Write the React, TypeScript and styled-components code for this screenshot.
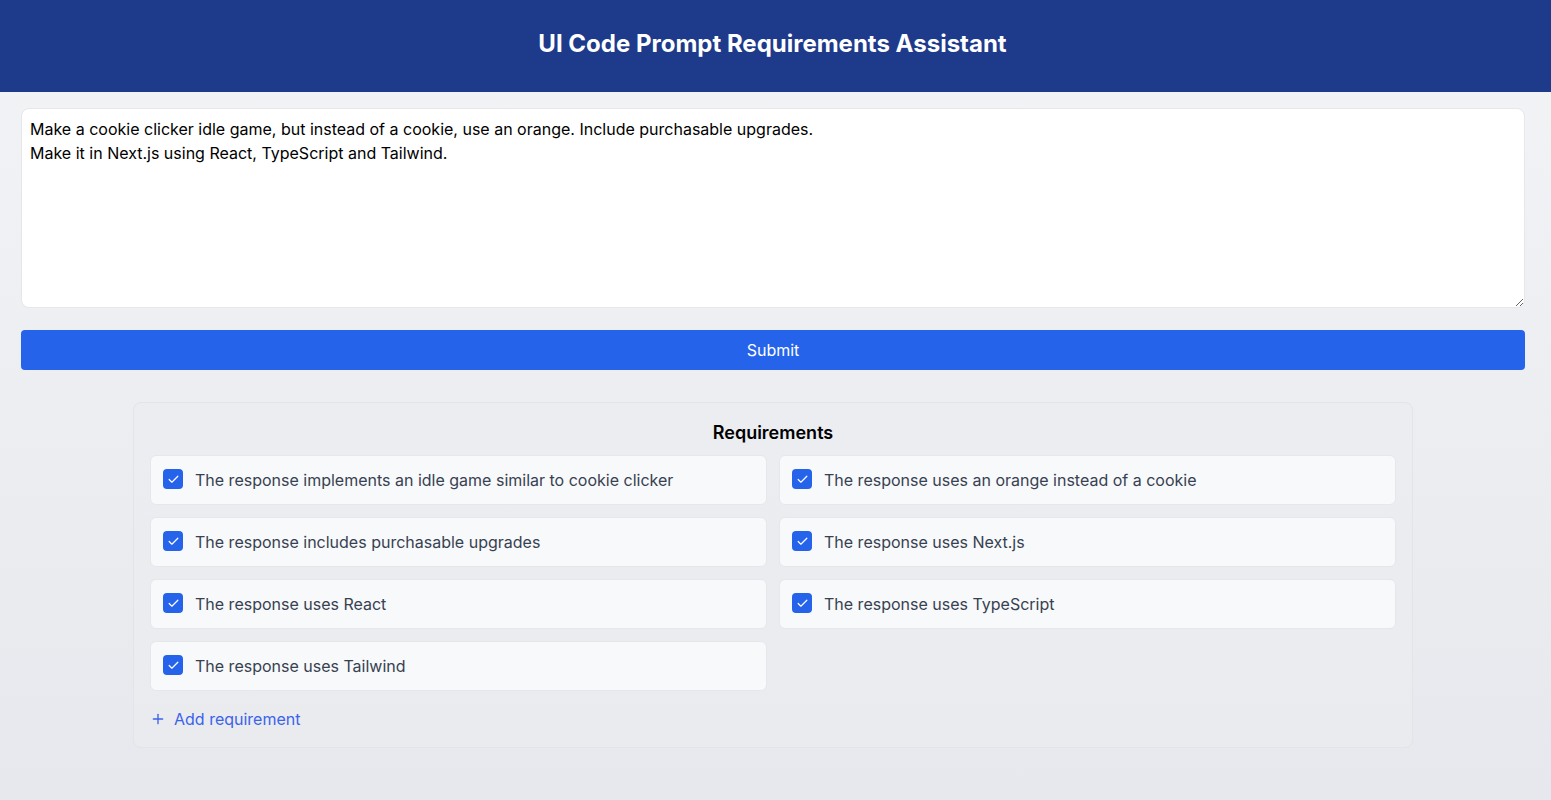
import React, { useState } from "react";
import styled, { createGlobalStyle } from "styled-components";

const GlobalStyle = createGlobalStyle`
  html, body { margin: 0; padding: 0; }
  body {
    font-family: Inter, "Noto Sans", sans-serif;
    background: linear-gradient(to bottom, #f3f4f6, #e7e8ed);
    min-height: 100vh;
  }
  * { box-sizing: border-box; }
`;

const Page = styled.div`
  min-height: 800px;
  display: flex;
  flex-direction: column;
`;

const Header = styled.header`
  background: #1e3a8a;
  padding: 30px 6px 34px 0;
  display: flex;
  justify-content: center;
`;

const Title = styled.h1`
  margin: 0;
  color: #ffffff;
  font-size: 24px;
  line-height: 28px;
  font-weight: 700;
`;

const Main = styled.main`
  padding: 16px 26px 32px 21px;
  display: flex;
  flex-direction: column;
`;

const PromptArea = styled.textarea`
  width: 100%;
  height: 200px;
  padding: 8px;
  border: 1px solid #e5e7eb;
  border-radius: 8px;
  background: #ffffff;
  font-family: Inter, "Noto Sans", sans-serif;
  font-size: 16px;
  line-height: 24px;
  color: #000000;
  resize: vertical;
  outline: none;
`;

const SubmitButton = styled.button`
  margin-top: 22px;
  height: 40px;
  width: 100%;
  border: none;
  border-radius: 4px;
  background: #2563eb;
  color: #ffffff;
  font-family: Inter, "Noto Sans", sans-serif;
  font-size: 16px;
  cursor: pointer;
`;

const Panel = styled.section`
  margin: 32px auto 0;
  width: 100%;
  max-width: 1280px;
  padding: 16px;
  border: 1px solid #e3e4e8;
  border-radius: 8px;
  background: rgba(235, 236, 240, 0.6);
`;

const PanelTitle = styled.h2`
  margin: 0 0 8px;
  text-align: center;
  font-size: 18px;
  line-height: 28px;
  font-weight: 600;
  color: #000000;
`;

const Grid = styled.div`
  display: grid;
  grid-template-columns: 1fr 1fr;
  gap: 12px;
`;

const Item = styled.label`
  display: flex;
  align-items: center;
  gap: 12px;
  padding: 12px;
  background: #f8f9fb;
  border: 1px solid #e5e7eb;
  border-radius: 6px;
  font-size: 16px;
  line-height: 24px;
  color: #374151;
  cursor: pointer;
`;

const Box = styled.span<{ $checked: boolean }>`
  flex: none;
  width: 20px;
  height: 20px;
  margin-top: -2px;
  border-radius: 4px;
  background: ${(p) => (p.$checked ? "#2563eb" : "#ffffff")};
  border: ${(p) => (p.$checked ? "none" : "1px solid #9ca3af")};
  display: flex;
  align-items: center;
  justify-content: center;
`;

const AddButton = styled.button`
  margin-top: 16px;
  display: flex;
  align-items: center;
  gap: 8px;
  padding: 0;
  border: none;
  background: none;
  color: #3b63ea;
  font-family: Inter, "Noto Sans", sans-serif;
  font-size: 16px;
  line-height: 24px;
  cursor: pointer;
`;

const initial = [
  "The response implements an idle game similar to cookie clicker",
  "The response uses an orange instead of a cookie",
  "The response includes purchasable upgrades",
  "The response uses Next.js",
  "The response uses React",
  "The response uses TypeScript",
  "The response uses Tailwind",
];

const CheckIcon = () => (
  <svg width="13" height="13" viewBox="0 0 24 24" fill="none" stroke="#ffffff" strokeWidth="2.2" strokeLinecap="round" strokeLinejoin="round">
    <polyline points="20 6 9 17 4 12" />
  </svg>
);

const PlusIcon = () => (
  <svg width="16" height="16" viewBox="0 0 24 24" fill="none" stroke="currentColor" strokeWidth="2" strokeLinecap="round">
    <path d="M5 12h14" />
    <path d="M12 5v14" />
  </svg>
);

export default function App() {
  const [checked, setChecked] = useState<boolean[]>(initial.map(() => true));
  const [prompt, setPrompt] = useState(
    "Make a cookie clicker idle game, but instead of a cookie, use an orange. Include purchasable upgrades.\nMake it in Next.js using React, TypeScript and Tailwind."
  );
  return (
    <Page>
      <GlobalStyle />
      <Header>
        <Title>UI Code Prompt Requirements Assistant</Title>
      </Header>
      <Main>
        <PromptArea value={prompt} onChange={(e) => setPrompt(e.target.value)} />
        <SubmitButton>Submit</SubmitButton>
        <Panel>
          <PanelTitle>Requirements</PanelTitle>
          <Grid>
            {initial.map((text, i) => (
              <Item
                key={text}
                onClick={() => setChecked((c) => c.map((v, j) => (j === i ? !v : v)))}
              >
                <Box $checked={checked[i]}>{checked[i] && <CheckIcon />}</Box>
                {text}
              </Item>
            ))}
          </Grid>
          <AddButton>
            <PlusIcon />
            Add requirement
          </AddButton>
        </Panel>
      </Main>
    </Page>
  );
}
